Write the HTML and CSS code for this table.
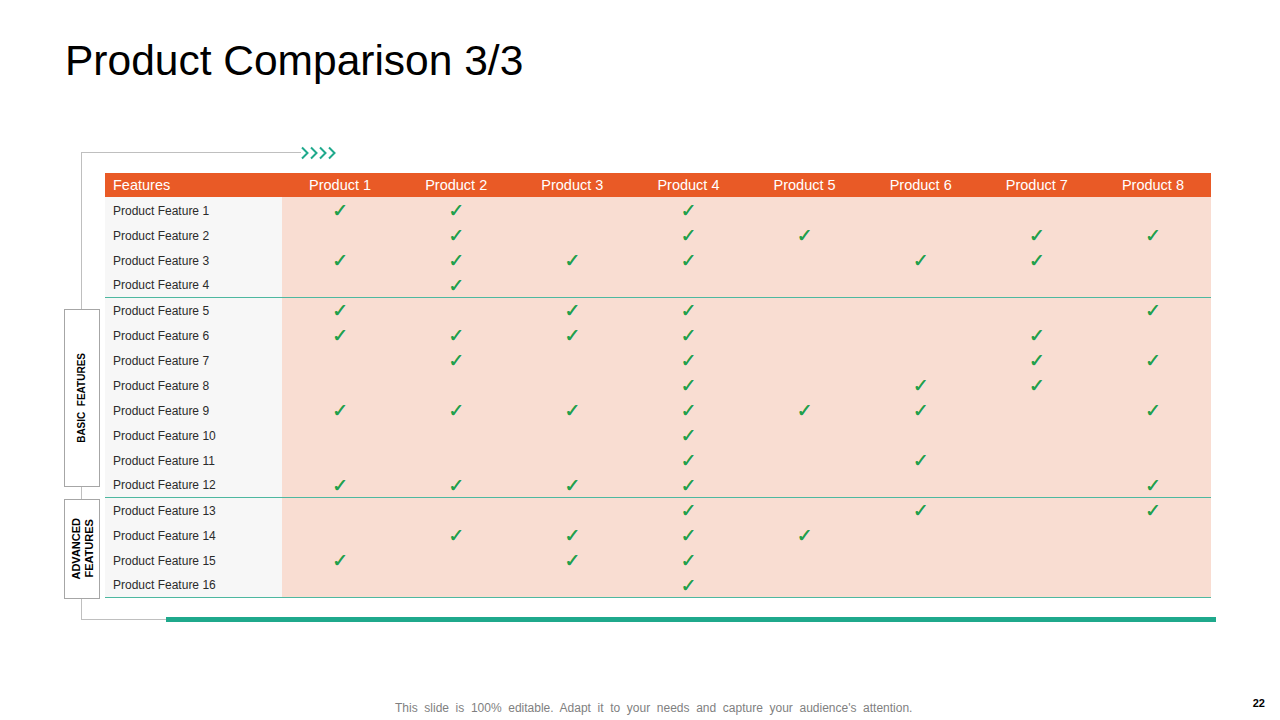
FILE: index.html
```
<!DOCTYPE html>
<html>
<head>
<meta charset="utf-8">
<link rel="stylesheet" href="styles.css">
</head>
<body>
<div class="slide">
  <h1 class="title">Product Comparison 3/3</h1>
  <div class="frame">
    <div class="frame-top">
      <span class="top-line"></span>
      <svg class="arrows" width="38" height="14" viewBox="0 0 38 14">
        <g fill="none" stroke="#1fa98c" stroke-width="2">
          <polyline points="1,1.5 6.5,7 1,12.5"/>
          <polyline points="10,1.5 15.5,7 10,12.5"/>
          <polyline points="19,1.5 24.5,7 19,12.5"/>
          <polyline points="28,1.5 33.5,7 28,12.5"/>
        </g>
      </svg>
    </div>
    <div class="frame-body">
      <div class="side">
        <div class="side-box basic"><span class="side-label">BASIC&nbsp; FEATURES</span></div>
        <div class="side-box adv"><span class="side-label adv-label">ADVANCED<br>FEATURES</span></div>
      </div>
      <div class="grid">
        <div class="row head">
          <div class="c feat">Features</div>
          <div class="c">Product 1</div><div class="c">Product 2</div><div class="c">Product 3</div><div class="c">Product 4</div>
          <div class="c">Product 5</div><div class="c">Product 6</div><div class="c">Product 7</div><div class="c">Product 8</div>
        </div>
        <div class="row first">
          <div class="c feat">Product Feature 1</div>
          <div class="c"><span class="ck">✓</span></div><div class="c"><span class="ck">✓</span></div><div class="c"></div><div class="c"><span class="ck">✓</span></div>
          <div class="c"></div><div class="c"></div><div class="c"></div><div class="c"></div>
        </div>
        <div class="row">
          <div class="c feat">Product Feature 2</div>
          <div class="c"></div><div class="c"><span class="ck">✓</span></div><div class="c"></div><div class="c"><span class="ck">✓</span></div>
          <div class="c"><span class="ck">✓</span></div><div class="c"></div><div class="c"><span class="ck">✓</span></div><div class="c"><span class="ck">✓</span></div>
        </div>
        <div class="row">
          <div class="c feat">Product Feature 3</div>
          <div class="c"><span class="ck">✓</span></div><div class="c"><span class="ck">✓</span></div><div class="c"><span class="ck">✓</span></div><div class="c"><span class="ck">✓</span></div>
          <div class="c"></div><div class="c"><span class="ck">✓</span></div><div class="c"><span class="ck">✓</span></div><div class="c"></div>
        </div>
        <div class="row sep">
          <div class="c feat">Product Feature 4</div>
          <div class="c"></div><div class="c"><span class="ck">✓</span></div><div class="c"></div><div class="c"></div>
          <div class="c"></div><div class="c"></div><div class="c"></div><div class="c"></div>
        </div>
        <div class="row">
          <div class="c feat">Product Feature 5</div>
          <div class="c"><span class="ck">✓</span></div><div class="c"></div><div class="c"><span class="ck">✓</span></div><div class="c"><span class="ck">✓</span></div>
          <div class="c"></div><div class="c"></div><div class="c"></div><div class="c"><span class="ck">✓</span></div>
        </div>
        <div class="row">
          <div class="c feat">Product Feature 6</div>
          <div class="c"><span class="ck">✓</span></div><div class="c"><span class="ck">✓</span></div><div class="c"><span class="ck">✓</span></div><div class="c"><span class="ck">✓</span></div>
          <div class="c"></div><div class="c"></div><div class="c"><span class="ck">✓</span></div><div class="c"></div>
        </div>
        <div class="row">
          <div class="c feat">Product Feature 7</div>
          <div class="c"></div><div class="c"><span class="ck">✓</span></div><div class="c"></div><div class="c"><span class="ck">✓</span></div>
          <div class="c"></div><div class="c"></div><div class="c"><span class="ck">✓</span></div><div class="c"><span class="ck">✓</span></div>
        </div>
        <div class="row">
          <div class="c feat">Product Feature 8</div>
          <div class="c"></div><div class="c"></div><div class="c"></div><div class="c"><span class="ck">✓</span></div>
          <div class="c"></div><div class="c"><span class="ck">✓</span></div><div class="c"><span class="ck">✓</span></div><div class="c"></div>
        </div>
        <div class="row">
          <div class="c feat">Product Feature 9</div>
          <div class="c"><span class="ck">✓</span></div><div class="c"><span class="ck">✓</span></div><div class="c"><span class="ck">✓</span></div><div class="c"><span class="ck">✓</span></div>
          <div class="c"><span class="ck">✓</span></div><div class="c"><span class="ck">✓</span></div><div class="c"></div><div class="c"><span class="ck">✓</span></div>
        </div>
        <div class="row">
          <div class="c feat">Product Feature 10</div>
          <div class="c"></div><div class="c"></div><div class="c"></div><div class="c"><span class="ck">✓</span></div>
          <div class="c"></div><div class="c"></div><div class="c"></div><div class="c"></div>
        </div>
        <div class="row">
          <div class="c feat">Product Feature 11</div>
          <div class="c"></div><div class="c"></div><div class="c"></div><div class="c"><span class="ck">✓</span></div>
          <div class="c"></div><div class="c"><span class="ck">✓</span></div><div class="c"></div><div class="c"></div>
        </div>
        <div class="row sep">
          <div class="c feat">Product Feature 12</div>
          <div class="c"><span class="ck">✓</span></div><div class="c"><span class="ck">✓</span></div><div class="c"><span class="ck">✓</span></div><div class="c"><span class="ck">✓</span></div>
          <div class="c"></div><div class="c"></div><div class="c"></div><div class="c"><span class="ck">✓</span></div>
        </div>
        <div class="row">
          <div class="c feat">Product Feature 13</div>
          <div class="c"></div><div class="c"></div><div class="c"></div><div class="c"><span class="ck">✓</span></div>
          <div class="c"></div><div class="c"><span class="ck">✓</span></div><div class="c"></div><div class="c"><span class="ck">✓</span></div>
        </div>
        <div class="row">
          <div class="c feat">Product Feature 14</div>
          <div class="c"></div><div class="c"><span class="ck">✓</span></div><div class="c"><span class="ck">✓</span></div><div class="c"><span class="ck">✓</span></div>
          <div class="c"><span class="ck">✓</span></div><div class="c"></div><div class="c"></div><div class="c"></div>
        </div>
        <div class="row">
          <div class="c feat">Product Feature 15</div>
          <div class="c"><span class="ck">✓</span></div><div class="c"></div><div class="c"><span class="ck">✓</span></div><div class="c"><span class="ck">✓</span></div>
          <div class="c"></div><div class="c"></div><div class="c"></div><div class="c"></div>
        </div>
        <div class="row sep">
          <div class="c feat">Product Feature 16</div>
          <div class="c"></div><div class="c"></div><div class="c"></div><div class="c"><span class="ck">✓</span></div>
          <div class="c"></div><div class="c"></div><div class="c"></div><div class="c"></div>
        </div>
      </div>
    </div>
    <div class="frame-bottom">
      <span class="bottom-line"></span>
      <span class="teal-bar"></span>
    </div>
  </div>
  <div class="footer">
    <span class="note">This slide is 100% editable. Adapt it to your needs and capture your audience's attention.</span>
    <span class="page">22</span>
  </div>
</div>
</body>
</html>
```
FILE: styles.css
```
* { box-sizing: border-box; }
html, body { margin: 0; padding: 0; background: #ffffff; }
body { font-family: "Liberation Sans", Arial, sans-serif; }
.slide {
  width: 1280px;
  height: 720px;
  overflow: hidden;
  background: #ffffff;
  display: flex;
  flex-direction: column;
}
.title {
  margin: 37px 0 0 65px;
  font-size: 42.5px;
  line-height: 48px;
  font-weight: normal;
  color: #000000;
}
.frame {
  margin: 67px 0 0 81px;
  width: 1135px;
  border-left: 1px solid #bfbfbf;
}
.frame-top {
  height: 1px;
  display: flex;
  align-items: center;
}
.top-line {
  width: 219px;
  height: 1px;
  background: #bfbfbf;
}
.arrows { display: block; flex: none; }
.frame-body {
  display: flex;
  align-items: flex-start;
  padding: 20px 0 20px 0;
}
.side {
  width: 36px;
  margin-left: -18px;
  padding-top: 136px;
  display: flex;
  flex-direction: column;
  gap: 12px;
}
.side-box {
  width: 36px;
  border: 1px solid #a6a6a6;
  background: #ffffff;
  display: flex;
  align-items: center;
  justify-content: center;
}
.side-box.basic { height: 178px; }
.side-box.adv { height: 100px; }
.side-label {
  writing-mode: vertical-rl;
  transform: rotate(180deg);
  font-size: 10px;
  line-height: 12px;
  font-weight: bold;
  color: #000000;
  text-align: center;
  white-space: nowrap;
}
.side-label.adv-label {
  font-size: 11px;
  line-height: 12.5px;
}
.grid {
  margin-left: 5px;
  width: 1106px;
}
.row {
  display: grid;
  grid-template-columns: 177px repeat(8, 1fr);
  height: 25px;
}
.row.first { height: 26px; }
.row.first .c { padding-top: 1px; }
.row.first .c.feat { padding-top: 1px; }
.row.sep { border-bottom: 1px solid #4db8a0; }
.c {
  background: #f9ddd2;
  display: flex;
  align-items: center;
  justify-content: center;
  font-size: 12px;
  color: #2b2b2b;
}
.c.feat {
  background: #f7f7f7;
  justify-content: flex-start;
  padding-left: 8px;
}
.row.head { height: 24px; }
.row.head .c {
  background: #e95a26;
  color: #ffffff;
  font-size: 14.5px;
}
.ck {
  font-family: "DejaVu Sans", sans-serif;
  color: #22a04c;
  font-size: 19px;
  line-height: 1;
  text-shadow: 0.4px 0 0 #22a04c;
}
.frame-bottom {
  height: 1px;
  display: flex;
  align-items: center;
}
.bottom-line {
  width: 84px;
  height: 1px;
  background: #bfbfbf;
}
.teal-bar {
  width: 1050px;
  height: 5px;
  background: #1fa98c;
}
.footer {
  margin-top: 76px;
  display: flex;
  align-items: flex-start;
}
.note {
  margin-top: 5px;
  padding-left: 395px;
  font-size: 12px;
  line-height: 14px;
  color: #7f7f7f;
  word-spacing: 3.3px;
}
.page {
  margin-left: auto;
  margin-right: 15px;
  margin-top: 1px;
  font-size: 11px;
  line-height: 13px;
  font-weight: bold;
  color: #000000;
}
```
